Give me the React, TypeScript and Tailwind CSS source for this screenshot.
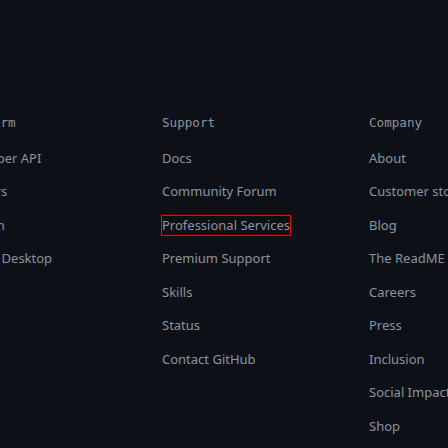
import React from "react";

const cols: { title: string; links: string[] }[] = [
  { title: "Platform", links: ["Developer API", "Partners", "Electron", "GitHub Desktop"] },
  {
    title: "Support",
    links: ["Docs", "Community Forum", "Professional Services", "Premium Support", "Skills", "Status", "Contact GitHub"],
  },
  {
    title: "Company",
    links: [
      "About",
      "Customer stories",
      "Blog",
      "The ReadME Project",
      "Careers",
      "Press",
      "Inclusion",
      "Social Impact",
      "Shop",
    ],
  },
];

export default function App() {
  return (
    <div className="w-[448px] h-[448px] overflow-hidden bg-[#0d1117]">
      <div className="flex ml-[-45px] pt-[113px]">
        {cols.map((c) => (
          <div key={c.title} className="w-[207px] shrink-0">
            <h3
              className="text-[12.6px] leading-[20px] text-[#8b949e] mb-[15px] whitespace-nowrap"
              style={{ fontFamily: '"DejaVu Sans Mono", monospace' }}
            >
              {c.title}
            </h3>
            <ul className="flex flex-col gap-[13.5px]">
              {c.links.map((l) => (
                <li key={l} className="h-[20px] flex items-center whitespace-nowrap">
                  <a
                    className={
                      "text-[13px] leading-[19px] text-[#8b949e] inline-block" +
                      (l === "Professional Services" ? " outline outline-1 outline-[#ff0000]" : "")
                    }
                    style={{ fontFamily: '"Noto Sans", sans-serif' }}
                  >
                    {l}
                  </a>
                </li>
              ))}
            </ul>
          </div>
        ))}
      </div>
    </div>
  );
}
